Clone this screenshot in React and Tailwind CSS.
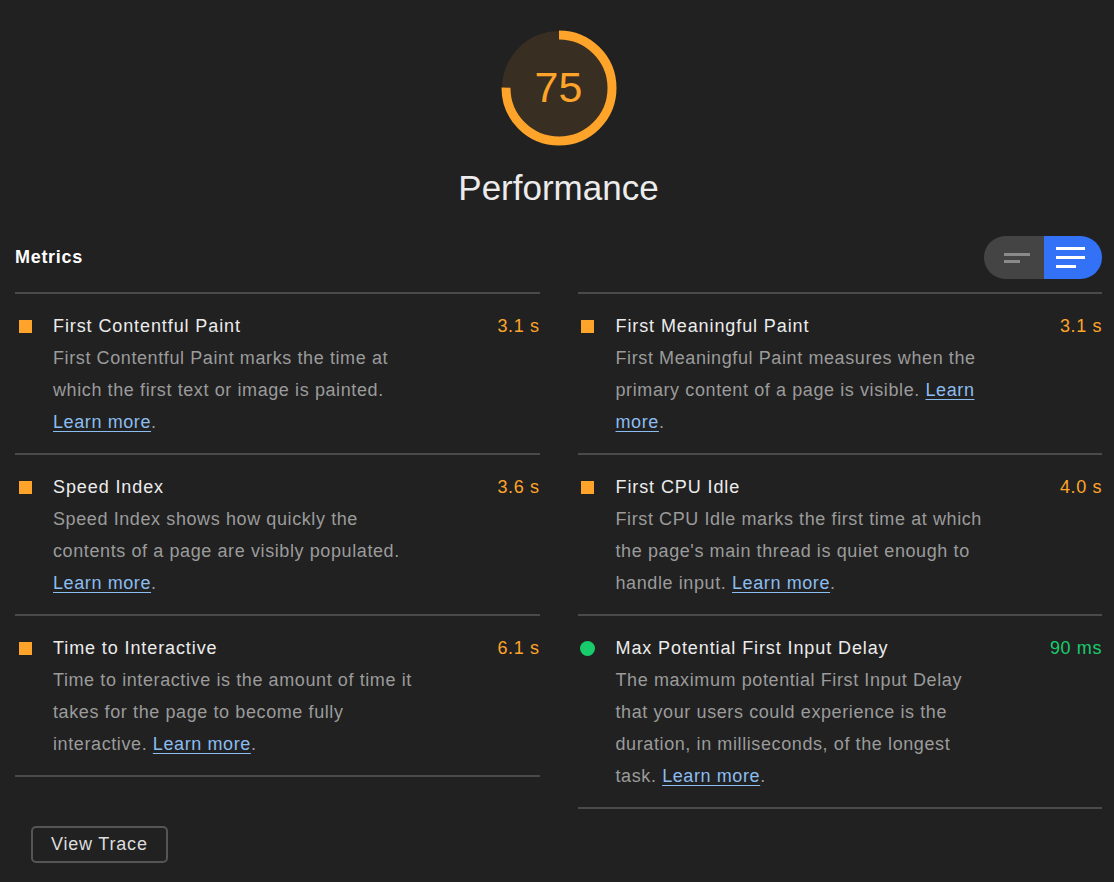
import React from "react";

// "~" marks the Learn more link, "~L" and "~M" mark it split over two lines
const metrics = {
  left: [
    {
      title: "First Contentful Paint",
      value: "3.1 s",
      status: "average",
      lines: ["First Contentful Paint marks the time at", "which the first text or image is painted.", "~."],
    },
    {
      title: "Speed Index",
      value: "3.6 s",
      status: "average",
      lines: ["Speed Index shows how quickly the", "contents of a page are visibly populated.", "~."],
    },
    {
      title: "Time to Interactive",
      value: "6.1 s",
      status: "average",
      lines: ["Time to interactive is the amount of time it", "takes for the page to become fully", "interactive. ~."],
    },
  ],
  right: [
    {
      title: "First Meaningful Paint",
      value: "3.1 s",
      status: "average",
      lines: ["First Meaningful Paint measures when the", "primary content of a page is visible. ~L", "~M."],
    },
    {
      title: "First CPU Idle",
      value: "4.0 s",
      status: "average",
      lines: ["First CPU Idle marks the first time at which", "the page's main thread is quiet enough to", "handle input. ~."],
    },
    {
      title: "Max Potential First Input Delay",
      value: "90 ms",
      status: "pass",
      lines: [
        "The maximum potential First Input Delay",
        "that your users could experience is the",
        "duration, in milliseconds, of the longest",
        "task. ~.",
      ],
    },
  ],
};

function Line({ text }) {
  const m = text.match(/^(.*?)~(L|M)?(.*)$/);
  if (!m) return <div>{text}</div>;
  const label = m[2] === "L" ? "Learn" : m[2] === "M" ? "more" : "Learn more";
  return (
    <div>
      {m[1]}
      <a href="#" className="text-[#8cbdf0] underline underline-offset-[3px]">{label}</a>
      {m[3]}
    </div>
  );
}

function Gauge({ score }) {
  const r = 53;
  const c = 2 * Math.PI * r;
  return (
    <div className="relative w-[116px] h-[116px]">
      <svg width="116" height="116" viewBox="0 0 116 116">
        <circle cx="58" cy="58" r="57" fill="#382e21" />
        <circle
          cx="58"
          cy="58"
          r={r}
          fill="none"
          stroke="#ffa42a"
          strokeWidth="9"
          strokeDasharray={`${(c * score) / 100} ${c}`}
          transform="rotate(-90 58 58)"
        />
      </svg>
      <div className="absolute inset-0 flex items-center justify-center text-[43px] text-[#ffa42a] pb-[2px]">
        {score}
      </div>
    </div>
  );
}

function Metric({ m }) {
  const color = m.status === "pass" ? "text-[#18cc6c]" : "text-[#ffa42a]";
  return (
    <div className="border-t-2 border-[#4a4a4a] pt-[16px] pb-[15px] flex">
      <div className="w-[20px] h-[32px] flex items-center justify-center shrink-0">
        {m.status === "pass" ? (
          <span className="w-[15px] h-[15px] rounded-full bg-[#18cc6c]" />
        ) : (
          <span className="w-[13px] h-[13px] bg-[#ffa42a]" />
        )}
      </div>
      <div className="ml-[18px] flex-1">
        <div className="flex justify-between leading-[32px]">
          <span className="text-[#ececec] tracking-[0.9px]">{m.title}</span>
          <span className={`${color} tracking-[0.6px]`}>{m.value}</span>
        </div>
        <div className="leading-[32px] text-[#9b9b9b] tracking-[0.6px] whitespace-nowrap">
          {m.lines.map((l, i) => (
            <Line key={i} text={l} />
          ))}
        </div>
      </div>
    </div>
  );
}

export default function App() {
  return (
    <div className="w-[1114px] min-h-[882px] bg-[#212121] text-[18px] font-['Liberation_Sans',Arial,sans-serif]">
      <div className="flex flex-col items-center pt-[30px] pl-[3px]">
        <Gauge score={75} />
        <h1 className="mt-[22px] text-[35px] leading-[40px] text-[#ececec]">Performance</h1>
      </div>

      <div className="pl-[15px] pr-[12px] mt-[28px]">
        <div className="flex items-center justify-between h-[43px]">
          <h2 className="font-bold text-[18px] text-white tracking-[0.7px]">Metrics</h2>
          <div className="flex h-[43px] rounded-full overflow-hidden">
            <button className="w-[60px] bg-[#444444] flex flex-col justify-center gap-[4px] pl-[20px]">
              <span className="block w-[26px] h-[3px] bg-[#8a8a8a]" />
              <span className="block w-[16px] h-[3px] bg-[#8a8a8a]" />
            </button>
            <button className="w-[58px] bg-[#3372f6] flex flex-col justify-center gap-[6px] pl-[12px]">
              <span className="block w-[29px] h-[3px] bg-white" />
              <span className="block w-[29px] h-[3px] bg-white" />
              <span className="block w-[20px] h-[3px] bg-white" />
            </button>
          </div>
        </div>

        <div className="mt-[13px] grid grid-cols-2 gap-x-[38px] items-start">
          <div className="border-b-2 border-[#4a4a4a]">
            {metrics.left.map((m) => (
              <Metric key={m.title} m={m} />
            ))}
          </div>
          <div className="border-b-2 border-[#4a4a4a]">
            {metrics.right.map((m) => (
              <Metric key={m.title} m={m} />
            ))}
          </div>
        </div>

        <button className="mt-[17px] ml-[16px] h-[37px] px-[18px] border-2 border-[#555555] rounded-[5px] text-[18px] text-[#dddddd] tracking-[0.8px]">
          View Trace
        </button>
      </div>
    </div>
  );
}
